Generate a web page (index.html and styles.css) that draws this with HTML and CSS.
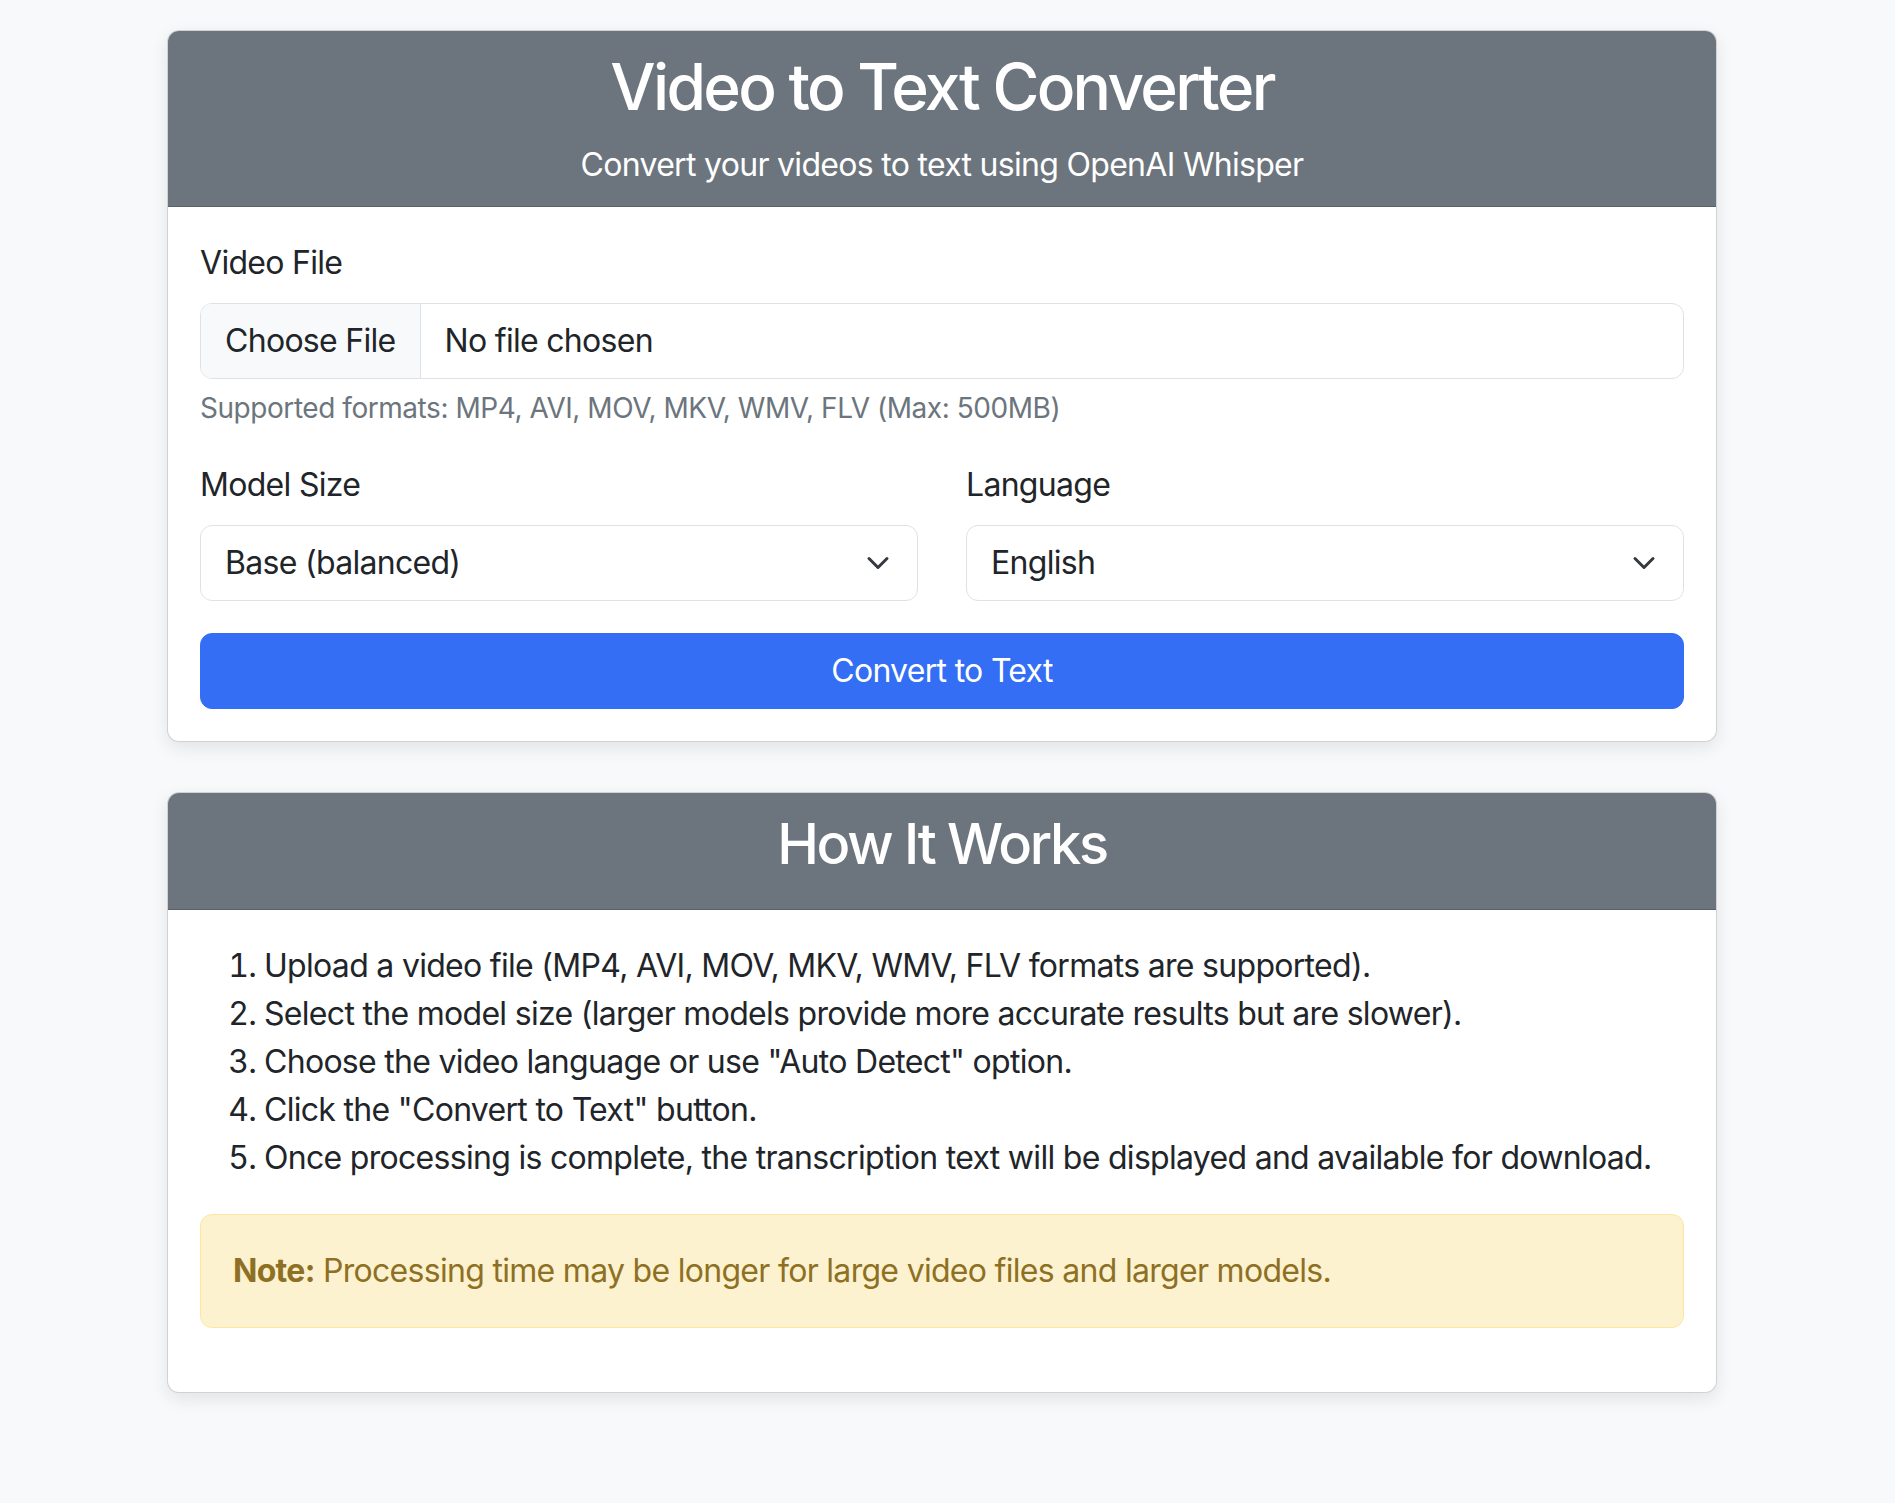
FILE: index.html
```html
<!DOCTYPE html>
<html lang="en">
<head>
<meta charset="utf-8">
<title>Video to Text Converter</title>
<link rel="stylesheet" href="styles.css">
</head>
<body>
<main class="container">
  <section class="card card-main">
    <header class="card-header">
      <h1 class="title">Video to Text Converter</h1>
      <p class="subtitle">Convert your videos to text using OpenAI Whisper</p>
    </header>
    <div class="card-body">
      <form class="form">
        <div class="field">
          <label class="label" for="video">Video File</label>
          <div class="file-control" id="video">
            <span class="file-btn">Choose File</span>
            <span class="file-name">No file chosen</span>
          </div>
          <div class="form-text">Supported formats: MP4, AVI, MOV, MKV, WMV, FLV (Max: 500MB)</div>
        </div>
        <div class="row">
          <div class="col">
            <label class="label" for="model">Model Size</label>
            <div class="select-wrap">
              <select class="select" id="model">
                <option>Tiny (fastest)</option>
                <option selected>Base (balanced)</option>
                <option>Small</option>
                <option>Medium</option>
                <option>Large (most accurate)</option>
              </select>
              <svg class="chevron" viewBox="0 0 16 16" width="24" height="24" aria-hidden="true"><path fill="none" stroke="#343a40" stroke-linecap="round" stroke-linejoin="round" stroke-width="2" d="m2 5 6 6 6-6"/></svg>
            </div>
          </div>
          <div class="col">
            <label class="label" for="lang">Language</label>
            <div class="select-wrap">
              <select class="select" id="lang">
                <option>Auto Detect</option>
                <option selected>English</option>
                <option>Spanish</option>
                <option>French</option>
              </select>
              <svg class="chevron" viewBox="0 0 16 16" width="24" height="24" aria-hidden="true"><path fill="none" stroke="#343a40" stroke-linecap="round" stroke-linejoin="round" stroke-width="2" d="m2 5 6 6 6-6"/></svg>
            </div>
          </div>
        </div>
        <button class="btn" type="button">Convert to Text</button>
      </form>
    </div>
  </section>

  <section class="card">
    <header class="card-header">
      <h2 class="title2">How It Works</h2>
    </header>
    <div class="card-body">
      <ol class="steps">
        <li>Upload a video file (MP4, AVI, MOV, MKV, WMV, FLV formats are supported).</li>
        <li>Select the model size (larger models provide more accurate results but are slower).</li>
        <li>Choose the video language or use "Auto Detect" option.</li>
        <li>Click the "Convert to Text" button.</li>
        <li>Once processing is complete, the transcription text will be displayed and available for download.</li>
      </ol>
      <div class="alert"><strong>Note:</strong> Processing time may be longer for large video files and larger models.</div>
    </div>
  </section>
</main>
</body>
</html>
```

FILE: styles.css
```css
* { box-sizing: border-box; }

html, body { margin: 0; }

body {
  background: #f8f9fa;
  color: #212529;
  font-family: Inter, "Noto Sans", "Liberation Sans", sans-serif;
  font-size: 32px;
  line-height: 48px;
  letter-spacing: -0.7px;
  padding: 30px 11px 0 0;
}

.container {
  width: 1550px;
  margin: 0 auto;
}

.card {
  background: #fff;
  border: 1px solid rgba(0, 0, 0, 0.175);
  border-radius: 12px;
  box-shadow: 0 6px 18px rgba(0, 0, 0, 0.09);
  overflow: hidden;
  margin-bottom: 50px;
}

.card-header {
  background: #6c757d;
  color: #fff;
  text-align: center;
  padding: 18px 32px 17px;
  border-bottom: 1px solid rgba(0, 0, 0, 0.175);
}

.title {
  margin: 0 0 17px;
  font-size: 64px;
  line-height: 75px;
  font-weight: 500;
  letter-spacing: -2.7px;
}

.subtitle {
  margin: 0;
  font-size: 32px;
  line-height: 48px;
}

.title2 {
  margin: 0 0 14px;
  font-size: 56px;
  line-height: 67px;
  font-weight: 500;
  letter-spacing: -2.3px;
}

.card-body {
  padding: 32px;
}

.form { margin: 0; }

.field { margin-bottom: 32px; }

.label {
  display: block;
  margin-bottom: 16px;
}

.file-control {
  display: flex;
  height: 76px;
  border: 1px solid #dee2e6;
  border-radius: 12px;
  overflow: hidden;
  align-items: stretch;
}

.file-btn {
  display: flex;
  align-items: center;
  padding: 0 24px;
  background: #f8f9fa;
  border-right: 1px solid #dee2e6;
}

.file-name {
  display: flex;
  align-items: center;
  padding: 0 24px;
}

.form-text {
  margin-top: 8px;
  font-size: 28px;
  line-height: 42px;
  letter-spacing: -0.45px;
  color: #6c757d;
}

.row {
  display: grid;
  grid-template-columns: 1fr 1fr;
  column-gap: 48px;
  margin-bottom: 32px;
}

.select-wrap {
  display: grid;
  align-items: center;
}

.select {
  grid-area: 1 / 1;
  appearance: none;
  -webkit-appearance: none;
  width: 100%;
  height: 76px;
  padding: 0 72px 0 24px;
  font: inherit;
  letter-spacing: inherit;
  color: #212529;
  background: #fff;
  border: 1px solid #dee2e6;
  border-radius: 12px;
}

.chevron {
  grid-area: 1 / 1;
  justify-self: end;
  margin-right: 28px;
  pointer-events: none;
}

.btn {
  display: block;
  width: 100%;
  height: 76px;
  font: inherit;
  letter-spacing: inherit;
  color: #fff;
  background: #336ef4;
  border: 1px solid #336ef4;
  border-radius: 12px;
}

.steps {
  margin: 0 0 32px;
  padding-left: 64px;
}

.alert {
  padding: 32px;
  border: 1px solid #fde69d;
  border-radius: 12px;
  background: #fdf2cf;
  color: #8e7024;
  margin-bottom: 32px;
}

.alert strong { font-weight: 700; }
```
